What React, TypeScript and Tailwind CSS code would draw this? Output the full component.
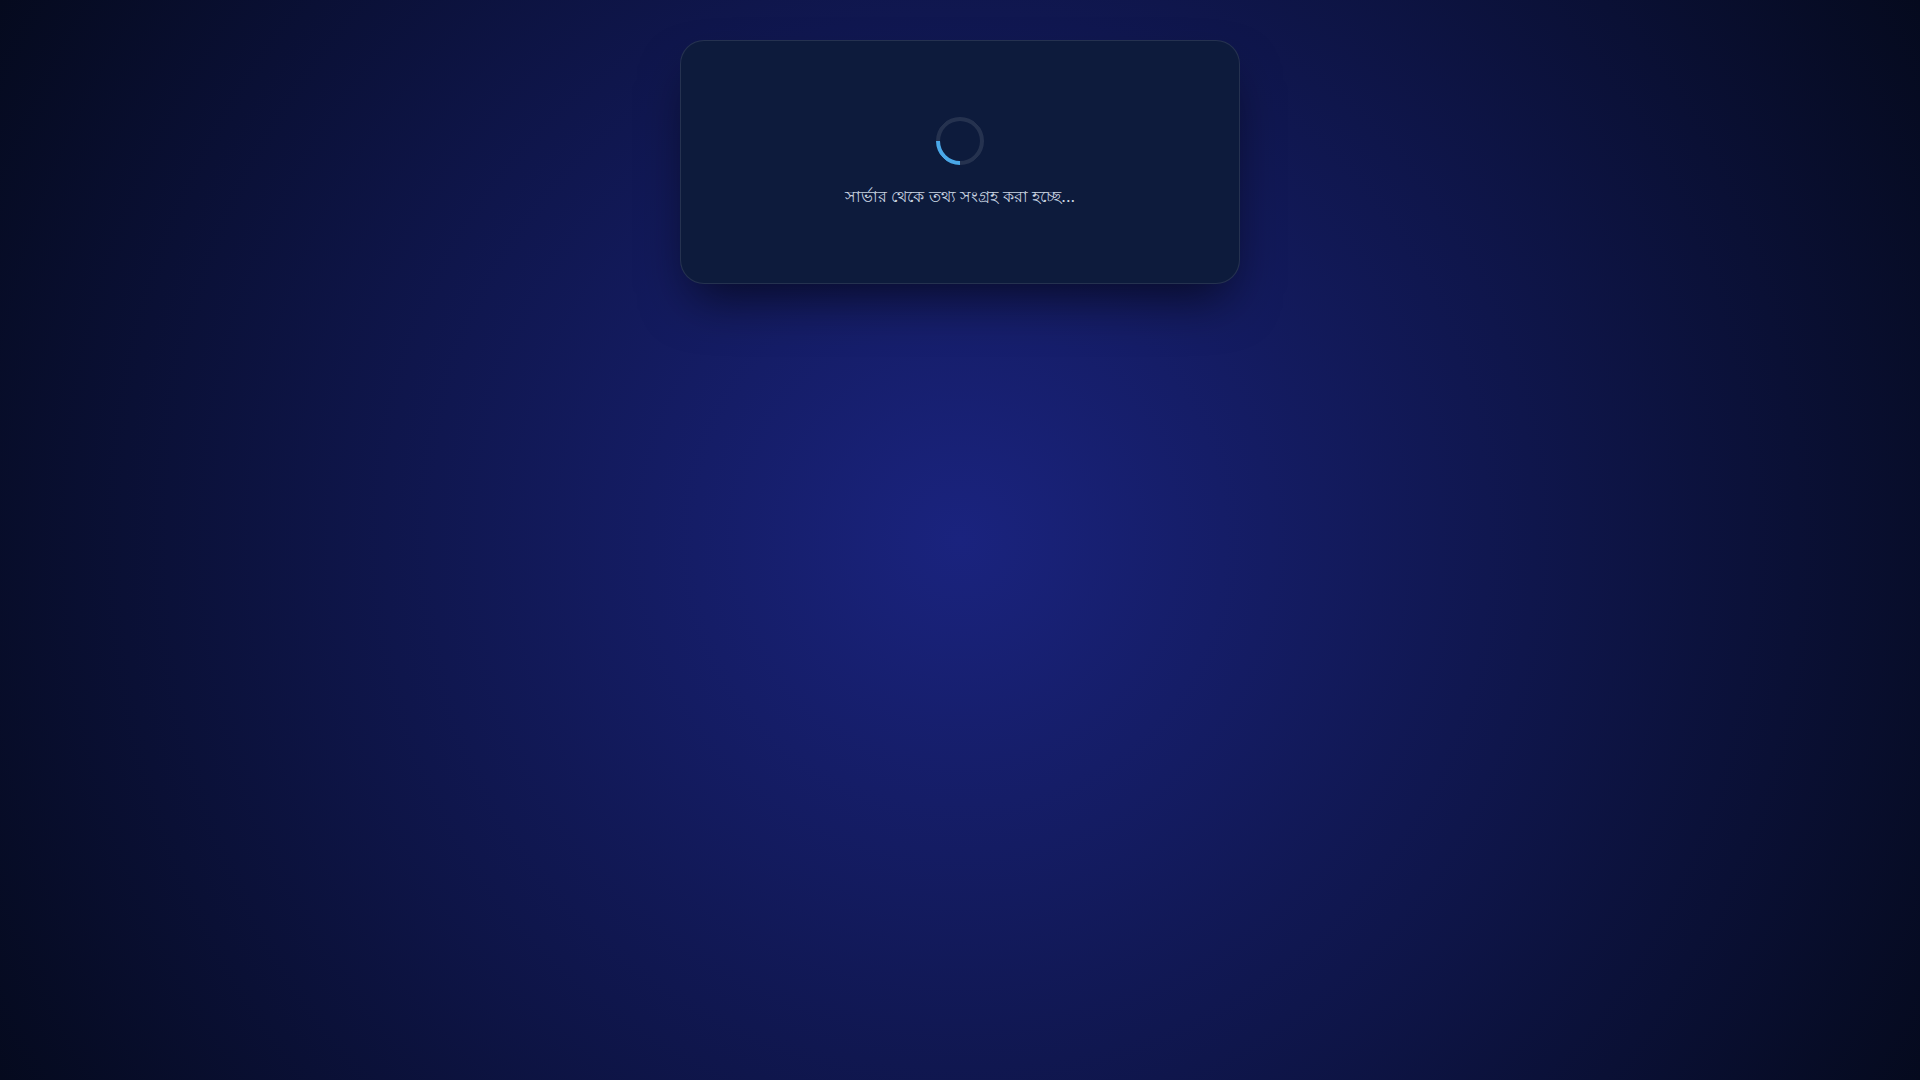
import React from 'react';

// --- LOADING SCREEN ---
const Spinner: React.FC = () => (
  <div className="w-12 h-12 rounded-full border-4 border-white/10 border-l-[#4aa8e8] -rotate-45" />
);

export default function App() {
  return (
    <div className="min-h-screen w-full flex justify-center bg-[radial-gradient(circle_at_center,#1a237e_0%,#050a1e_100%)] font-['Inter',sans-serif]">
      <div className="mt-10 w-[560px] h-[244px] self-start rounded-3xl border border-white/10 bg-[#0d1b3c] shadow-[0_25px_50px_-12px_rgba(0,0,0,0.6)] flex flex-col items-center pt-[76px]">
        <Spinner />
        <p className="mt-[19px] text-base leading-6 text-slate-300">
          সার্ভার থেকে তথ্য সংগ্রহ করা হচ্ছে...
        </p>
      </div>
    </div>
  );
}
